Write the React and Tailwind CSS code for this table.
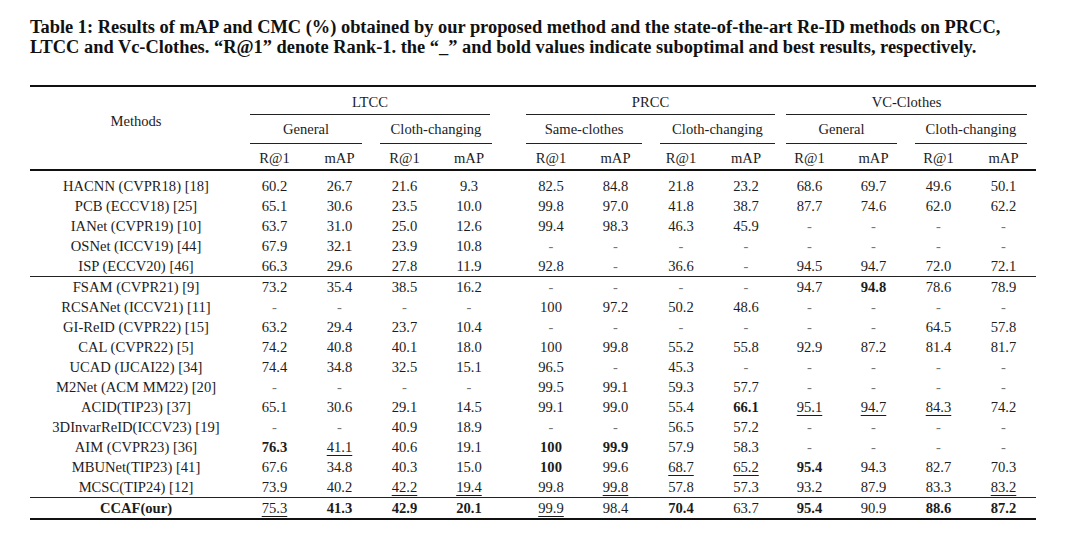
const rows = [
  ['HACNN (CVPR18) [18]', '60.2 26.7 21.6 9.3 82.5 84.8 21.8 23.2 68.6 69.7 49.6 50.1'],
  ['PCB (ECCV18) [25]', '65.1 30.6 23.5 10.0 99.8 97.0 41.8 38.7 87.7 74.6 62.0 62.2'],
  ['IANet (CVPR19) [10]', '63.7 31.0 25.0 12.6 99.4 98.3 46.3 45.9 - - - -'],
  ['OSNet (ICCV19) [44]', '67.9 32.1 23.9 10.8 - - - - - - - -'],
  ['ISP (ECCV20) [46]', '66.3 29.6 27.8 11.9 92.8 - 36.6 - 94.5 94.7 72.0 72.1'],
];

const rows2 = [
  ['FSAM (CVPR21) [9]', '73.2 35.4 38.5 16.2 - - - - 94.7 *94.8 78.6 78.9'],
  ['RCSANet (ICCV21) [11]', '- - - - 100 97.2 50.2 48.6 - - - -'],
  ['GI-ReID (CVPR22) [15]', '63.2 29.4 23.7 10.4 - - - - - - 64.5 57.8'],
  ['CAL (CVPR22) [5]', '74.2 40.8 40.1 18.0 100 99.8 55.2 55.8 92.9 87.2 81.4 81.7'],
  ['UCAD (IJCAI22) [34]', '74.4 34.8 32.5 15.1 96.5 - 45.3 - - - - -'],
  ['M2Net (ACM MM22) [20]', '- - - - 99.5 99.1 59.3 57.7 - - - -'],
  ['ACID(TIP23) [37]', '65.1 30.6 29.1 14.5 99.1 99.0 55.4 *66.1 _95.1 _94.7 _84.3 74.2'],
  ['3DInvarReID(ICCV23) [19]', '- - 40.9 18.9 - - 56.5 57.2 - - - -'],
  ['AIM (CVPR23) [36]', '*76.3 _41.1 40.6 19.1 *100 *99.9 57.9 58.3 - - - -'],
  ['MBUNet(TIP23) [41]', '67.6 34.8 40.3 15.0 *100 99.6 _68.7 _65.2 *95.4 94.3 82.7 70.3'],
  ['MCSC(TIP24) [12]', '73.9 40.2 _42.2 _19.4 99.8 _99.8 57.8 57.3 93.2 87.9 83.3 _83.2'],
];

const ours = ['CCAF(our)', '_75.3 *41.3 *42.9 *20.1 _99.9 98.4 *70.4 63.7 *95.4 90.9 *88.6 *87.2'];

// nudges so the numbers sit where the paper puts them
const colPad = ['', '', '', 'pr-[9px]', 'pl-[9px]', '', '', '', '', '', '', ''];

const grid =
  'grid grid-cols-[212px_65px_65px_65px_73px_73px_65px_66px_64px_63px_65px_65px_65px]';

const Cell = ({ v, i }) => {
  let cls = 'h-5 leading-5 text-center ' + colPad[i];
  if (v.startsWith('*')) {
    return <div className={cls + ' font-bold'}>{v.slice(1)}</div>;
  }
  if (v.startsWith('_')) {
    return (
      <div className={cls}>
        <span className="underline decoration-1 underline-offset-[3px]">{v.slice(1)}</span>
      </div>
    );
  }
  if (v === '-') cls += ' text-[#777]';
  return <div className={cls}>{v}</div>;
};

const Row = ({ name, vals, bold }) => (
  <div className={grid}>
    <div className={'h-5 leading-5 text-center ' + (bold ? 'font-bold' : '')}>{name}</div>
    {vals.split(' ').map((v, i) => (
      <Cell key={i} v={v} i={i} />
    ))}
  </div>
);

export default function App() {
  return (
    <div className="w-[1080px] h-[539px] bg-white text-[#1c1c1c] overflow-hidden font-['Liberation_Serif','Times_New_Roman',serif]">
      <div className="pl-[30px] pt-[17px] text-[18.4px] leading-5 font-bold text-[#111] whitespace-nowrap">
        Table 1: Results of mAP and CMC (%) obtained by our proposed method and the state-of-the-art Re-ID methods on PRCC,
        <br />
        LTCC and Vc-Clothes. “R@1” denote Rank-1. the “_” and bold values indicate suboptimal and best results, respectively.
      </div>

      <div className="ml-[30px] mt-[28px] w-[1006px] text-[14.6px]">
        <div className="h-[2px] bg-[#111]" />

        {/* header */}
        <div className={grid}>
          <div className="row-span-3 pt-[24px]">
            <div className="h-5 leading-5 text-center">Methods</div>
          </div>

          {[
            ['LTCC', 'ml-[8px] mr-[20px]'],
            ['PRCC', 'ml-[16px] mr-[3px]'],
            ['VC-Clothes', 'ml-[8px] mr-[9px]'],
          ].map(([label, m]) => (
            <div key={label} className="col-span-4 pt-[5px]">
              <div className={m}>
                <div className="h-5 leading-5 text-center">{label}</div>
                <div className="mt-[2px] h-px bg-[#222]" />
              </div>
            </div>
          ))}

          {[
            ['General', 'ml-[8px] mr-[10px]'],
            ['Cloth-changing', 'ml-[8px] mr-[18px]'],
            ['Same-clothes', 'ml-[16px] mr-[6px]'],
            ['Cloth-changing', 'ml-[12px] mr-[3px]'],
            ['General', 'ml-[8px] mr-[9px]'],
            ['Cloth-changing', 'ml-[9px] mr-[9px]'],
          ].map(([label, m], i) => (
            <div key={i} className="col-span-2 pt-[4px]">
              <div className={m}>
                <div className="h-5 leading-5 text-center">{label}</div>
                <div className="mt-[4px] h-px bg-[#222]" />
              </div>
            </div>
          ))}

          {['R@1', 'mAP', 'R@1', 'mAP', 'R@1', 'mAP', 'R@1', 'mAP', 'R@1', 'mAP', 'R@1', 'mAP'].map((h, i) => (
            <div key={i} className={'pt-[4px] pb-[1px] ' + colPad[i]}>
              <div className="h-5 leading-5 text-center">{h}</div>
            </div>
          ))}
        </div>

        <div className="h-[1.5px] bg-[#111]" />

        {/* body */}
        <div className="pt-[5px]">
          {rows.map(([n, v]) => (
            <Row key={n} name={n} vals={v} />
          ))}
        </div>
        <div className="h-px bg-[#222]" />
        {rows2.map(([n, v]) => (
          <Row key={n} name={n} vals={v} />
        ))}
        <div className="h-px bg-[#222]" />
        <Row name={ours[0]} vals={ours[1]} bold />
        <div className="h-[2px] bg-[#111]" />
      </div>
    </div>
  );
}
